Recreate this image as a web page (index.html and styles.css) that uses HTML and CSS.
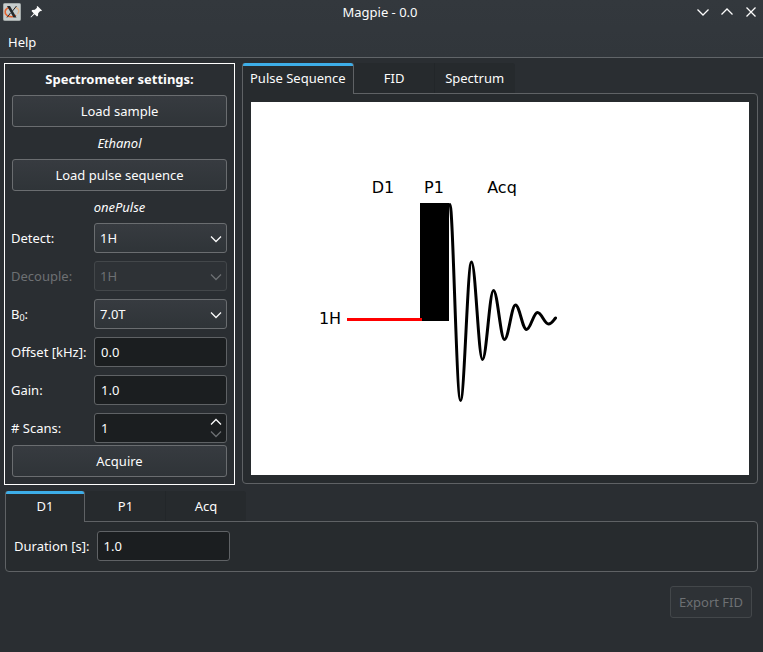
FILE: index.html
```html
<!DOCTYPE html>
<html lang="en">
<head>
<meta charset="utf-8">
<title>Magpie - 0.0</title>
<link rel="stylesheet" href="styles.css">
</head>
<body>
<header class="window-header">
  <div class="titlebar">
    <div class="title-side">
      <svg width="18" height="18" viewBox="0 0 18 18" aria-hidden="true">
        <rect x="0.5" y="0.5" width="17" height="17" rx="1" fill="#c6cccc" stroke="#a3a9a9"/>
        <path d="M6 4.500C1.500 6 1 10 4 12.500C7 14.500 11 14 13 12" fill="none" stroke="#e4622f" stroke-width="1.600"/>
        <path d="M12 4.500C16 5 17 8.500 14.500 11" fill="none" stroke="#e5b287" stroke-width="1.400"/>
        <path d="M4 3H7L13.500 14.500H10.500Z" fill="#24282b"/>
        <path d="M13.500 3L9.500 8M7.500 10L4 14.500" fill="none" stroke="#24282b"/>
      </svg>
      <svg width="12" height="12" viewBox="0 0 12 12" aria-hidden="true">
        <path d="M7.500 0L12 4.500L11 5.300L10.200 5L8.200 7.200L8 9.800L7 10.500L4.500 8.200L1 11.500L0.500 11L3.800 7.500L1.500 5L2.200 4L4.800 3.800L7 1.800L6.700 0.800Z" fill="#fcfcfc"/>
      </svg>
    </div>
    <h1 class="title">Magpie - 0.0</h1>
    <div class="title-side title-controls">
      <button class="window-button" aria-label="Minimize"><svg class="line-icon" width="12" height="12" viewBox="0 0 12 12"><path d="M0.500 3.500L6 9L11.500 3.500"/></svg></button>
      <button class="window-button" aria-label="Maximize"><svg class="line-icon" width="12" height="12" viewBox="0 0 12 12"><path d="M0.500 8.500L6 3L11.500 8.500"/></svg></button>
      <button class="window-button" aria-label="Close"><svg class="line-icon" width="12" height="12" viewBox="0 0 12 12"><path d="M1.500 1.500L10.500 10.500M10.500 1.500L1.500 10.500"/></svg></button>
    </div>
  </div>
  <nav class="menubar"><button class="menu-item">Help</button></nav>
</header>

<main class="content">
  <div class="upper">
    <section class="settings">
      <h2 class="settings-title">Spectrometer settings:</h2>
      <button class="button">Load sample</button>
      <p class="note">Ethanol</p>
      <button class="button">Load pulse sequence</button>
      <p class="note">onePulse</p>
      <div class="fields">
        <label for="detect">Detect:</label>
        <div class="control">
          <select id="detect" class="field combo"><option>1H</option></select>
          <svg class="line-icon chevron" width="12" height="8" viewBox="0 0 12 8"><path d="M1 1.500L6 6.500L11 1.500"/></svg>
        </div>
        <label for="decouple" class="disabled">Decouple:</label>
        <div class="control disabled">
          <select id="decouple" class="field combo" disabled><option>1H</option></select>
          <svg class="line-icon chevron" width="12" height="8" viewBox="0 0 12 8"><path d="M1 1.500L6 6.500L11 1.500"/></svg>
        </div>
        <label for="field-strength">B<sub>0</sub>:</label>
        <div class="control">
          <select id="field-strength" class="field combo"><option>7.0T</option></select>
          <svg class="line-icon chevron" width="12" height="8" viewBox="0 0 12 8"><path d="M1 1.500L6 6.500L11 1.500"/></svg>
        </div>
        <label for="offset">Offset [kHz]:</label>
        <input id="offset" class="field" type="text" value="0.0">
        <label for="gain">Gain:</label>
        <input id="gain" class="field" type="text" value="1.0">
        <label for="scans"># Scans:</label>
        <div class="control">
          <input id="scans" class="field spin" type="number" min="1" value="1">
          <div class="spin-buttons">
            <svg class="line-icon" width="12" height="8" viewBox="0 0 12 8"><path d="M1 6.500L6 1.500L11 6.500"/></svg>
            <svg class="line-icon disabled" width="12" height="8" viewBox="0 0 12 8"><path d="M1 1.500L6 6.500L11 1.500"/></svg>
          </div>
        </div>
      </div>
      <button class="button">Acquire</button>
    </section>

    <section class="tabs viewer">
      <div class="tablist" role="tablist">
        <button class="tab active" role="tab" aria-selected="true">Pulse Sequence</button>
        <button class="tab" role="tab" aria-selected="false">FID</button>
        <button class="tab" role="tab" aria-selected="false">Spectrum</button>
      </div>
      <div class="pane plot-pane" role="tabpanel">
        <svg class="plot" viewBox="0 0 498 373" role="img" aria-label="Pulse sequence diagram">
          <rect x="169" y="101" width="29" height="118"/>
          <path d="M96 217.500H171" stroke="#f00" stroke-width="3"/>
          <path class="signal" d="M199 102.500C202 102.500 205.500 298.500 209.500 298.500C213.500 298.500 216.500 160 220.500 160C224.500 160 227.500 257.500 231.500 257.500C235.500 257.500 238.500 188.500 242.500 188.500C246.500 188.500 249.500 237.500 253.500 237.500C257.500 237.500 260.500 203 264.500 203C268.500 203 271.500 227.500 275.500 227.500C279.500 227.500 282.500 210.500 286.500 210.500C290.500 210.500 293.500 222 297.500 222C300.500 222 302 219 304.500 216"/>
          <text x="132" y="91" text-anchor="middle">D1</text>
          <text x="183" y="91" text-anchor="middle">P1</text>
          <text x="251" y="91" text-anchor="middle">Acq</text>
          <text x="79" y="222" text-anchor="middle">1H</text>
        </svg>
      </div>
    </section>
  </div>

  <section class="tabs events">
    <div class="tablist" role="tablist">
      <button class="tab active" role="tab" aria-selected="true">D1</button>
      <button class="tab" role="tab" aria-selected="false">P1</button>
      <button class="tab" role="tab" aria-selected="false">Acq</button>
    </div>
    <div class="pane event-pane" role="tabpanel">
      <label for="duration">Duration [s]:</label>
      <input id="duration" class="field duration" type="text" value="1.0">
    </div>
  </section>

  <footer class="actions">
    <button class="button" disabled>Export FID</button>
  </footer>
</main>
</body>
</html>
```
FILE: styles.css
```css
* {
  box-sizing: border-box;
}

body {
  margin: 0;
  min-height: 100vh;
  background: #2a2e32;
  color: #fcfcfc;
  font: 13px/18px "Noto Sans", sans-serif;
}

button,
input,
select {
  font: inherit;
  color: inherit;
}

.line-icon {
  fill: none;
  stroke: currentColor;
  stroke-width: 1.25;
}

.window-header {
  height: 58px;
  background: linear-gradient(#33383d, #31363b);
  border-bottom: 1px solid #616569;
}

.titlebar {
  display: grid;
  grid-template-columns: 1fr auto 1fr;
  align-items: center;
  height: 24px;
  padding: 0 6px 0 3px;
}

.title {
  margin: 0;
  font-size: 13px;
  font-weight: 400;
}

.title-side {
  display: flex;
  align-items: center;
  gap: 9px;
}

.title-controls {
  justify-content: flex-end;
  gap: 12px;
}

.window-button {
  display: flex;
  padding: 0;
  border: 0;
  background: none;
}

.menubar {
  display: flex;
  align-items: center;
  height: 36px;
}

.menu-item {
  padding: 0 8px;
  border: 0;
  background: none;
}

.content {
  padding: 5px 5px 0 4px;
}

.upper {
  display: flex;
  gap: 7px;
}

.settings {
  flex: none;
  display: flex;
  flex-direction: column;
  width: 231px;
  padding: 0 7px 7px;
  border: 1px solid #fff;
}

.settings-title {
  margin: 0;
  font-size: 13px;
  line-height: 31px;
  text-align: center;
}

.note {
  margin: 0;
  line-height: 32px;
  font-style: italic;
  text-align: center;
}

.button {
  height: 32px;
  padding: 0 8px;
  border: 1px solid #6a6d70;
  border-radius: 3px;
  background: linear-gradient(#373b40, #2f3438);
}

.button:disabled {
  border-color: #43474a;
  background: #2e3236;
  color: #6d7073;
}

.fields {
  display: grid;
  grid-template-columns: auto 133px;
  justify-content: space-between;
  align-items: center;
  gap: 8px 0;
  margin: 0 0 2px -1px;
}

.fields label {
  white-space: nowrap;
}

sub {
  font-size: 9px;
  line-height: 0;
  vertical-align: -2px;
}

.control {
  position: relative;
}

.field {
  display: block;
  width: 100%;
  height: 30px;
  margin: 0;
  padding: 0 6px;
  border: 1px solid #5f6265;
  border-radius: 3px;
  background: #1b1e20;
  appearance: none;
}

.combo {
  padding: 0 5px;
  border-color: #6a6d70;
  background: linear-gradient(#373b40, #2f3438);
  opacity: 1;
}

.combo:disabled {
  border-color: #43474a;
  background: #2e3236;
}

.spin {
  appearance: textfield;
}

.spin::-webkit-inner-spin-button {
  display: none;
}

.chevron {
  position: absolute;
  right: 5px;
  top: 12px;
  pointer-events: none;
}

.spin-buttons {
  position: absolute;
  right: 5px;
  top: 5px;
  display: flex;
  flex-direction: column;
  gap: 4px;
}

.disabled {
  color: #6d7073;
}

.tabs {
  display: flex;
  flex-direction: column;
}

.viewer {
  flex: 1;
  min-width: 0;
}

.tablist {
  display: flex;
  height: 30px;
}

.tab {
  min-width: 80px;
  padding: 0 8px;
  border: 0;
  border-right: 1px solid #222629;
  background: #262a2d;
}

.tab.active + .tab {
  min-width: 81px;
  padding-left: 9px;
}

.tab:last-child {
  border-right: 0;
  border-radius: 0 3px 0 0;
}

.tab.active {
  z-index: 1;
  height: 31px;
  padding: 0 7px 1px;
  border: 1px solid #5f6265;
  border-width: 0 1px;
  border-radius: 3px 3px 0 0;
  background: linear-gradient(#3daee9 3px, #272b2e 3px) border-box;
}

.pane {
  border: 1px solid #5f6265;
  border-radius: 0 4px 4px 4px;
  background: #272b2e;
}

.plot-pane {
  flex: 1;
  display: flex;
  margin-bottom: 1px;
  padding: 8px;
}

.plot {
  flex: 1;
  min-width: 0;
  background: #fff;
  font: 16px "DejaVu Sans", sans-serif;
}

.signal {
  fill: none;
  stroke: #000;
  stroke-width: 3;
  stroke-linecap: round;
}

.events {
  margin: 6px 0 0 1px;
}

.event-pane {
  display: flex;
  align-items: center;
  gap: 7px;
  padding: 9px 8px 10px;
}

.duration {
  width: 133px;
}

.actions {
  display: flex;
  justify-content: flex-end;
  padding: 14px 6px 0 0;
}
```
